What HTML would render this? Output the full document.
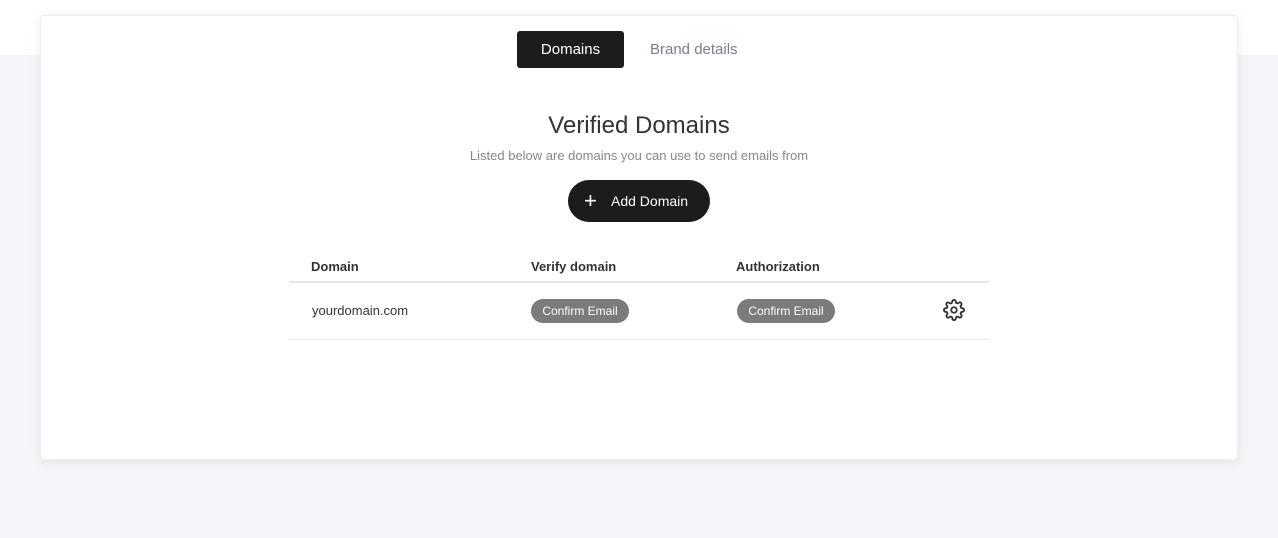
<!DOCTYPE html>
<html><head><style>
*{box-sizing:border-box;margin:0;padding:0}
body{width:1278px;height:538px;overflow:hidden;font-family:"Liberation Sans",sans-serif;background:#f4f5f9;position:relative}
.top{position:absolute;left:0;top:0;width:1278px;height:55px;background:#fff}
.card{position:absolute;left:40px;top:15px;width:1198px;height:445px;background:#fff;border-radius:4px;box-shadow:0 2px 12px rgba(0,0,0,0.07);border:1px solid #eceef2}
.tab{position:absolute;top:31px;height:37px;line-height:37px;font-size:15px}
.t1{left:517px;width:107px;background:#1c1c1c;color:#fff;border-radius:3px;text-align:center}
.t2{left:650px;color:#7a7f88}
h1{position:absolute;top:112px;left:0;width:1278px;text-align:center;font-weight:normal;font-size:24px;color:#333}
.sub{position:absolute;top:148px;left:0;width:1278px;text-align:center;font-size:13px;color:#888}
.btn{position:absolute;left:568px;top:180px;width:142px;height:42px;border-radius:21px;background:#1c1c1c;color:#fff;font-size:14px;line-height:42px}
.btn .p{position:absolute;left:16px;top:0;font-size:22px}
.btn .l{position:absolute;left:43px}
.th{position:absolute;top:259px;font-size:13px;color:#333;font-weight:bold}
.line{position:absolute;left:289px;width:700px;background:#e6e7ea}
.td{position:absolute;top:303px;font-size:13px;color:#333}
.pill{position:absolute;top:299px;height:24px;line-height:24px;width:98px;border-radius:12px;background:#7b7b7b;color:#fff;font-size:12px;text-align:center}
</style></head><body>
<div class="top"></div>
<div class="card"></div>
<div class="tab t1">Domains</div>
<div class="tab t2">Brand details</div>
<h1>Verified Domains</h1>
<div class="sub">Listed below are domains you can use to send emails from</div>
<div class="btn"><span class="p">+</span><span class="l">Add Domain</span></div>
<div class="th" style="left:311px">Domain</div>
<div class="th" style="left:531px">Verify domain</div>
<div class="th" style="left:736px">Authorization</div>
<div class="line" style="top:281px;height:2px"></div>
<div class="td" style="left:312px">yourdomain.com</div>
<div class="pill" style="left:531px">Confirm Email</div>
<div class="pill" style="left:737px">Confirm Email</div>
<svg style="position:absolute;left:943px;top:299px" width="22" height="22" viewBox="0 0 24 24" fill="none" stroke="#333" stroke-width="2"><circle cx="12" cy="12" r="3"/><path d="M19.4 15a1.650 1.65 0 0 0 .33 1.82l.06.06a2 2 0 1 1-2.83 2.830l-.06-.06a1.65 1.65 0 0 0-1.82-.33 1.65 1.65 0 0 0-1 1.51V21a2 2 0 0 1-4 0v-.09A1.65 1.65 0 0 0 9 19.4a1.65 1.65 0 0 0-1.82.33l-.06.06a2 2 0 1 1-2.83-2.83l.06-.06A1.65 1.65 0 0 0 4.68 15a1.65 1.65 0 0 0-1.51-1H3a2 2 0 0 1 0-4h.09A1.65 1.65 0 0 0 4.6 9a1.65 1.65 0 0 0-.33-1.82l-.06-.06a2 2 0 1 1 2.830-2.83l.06.06A1.65 1.65 0 0 0 9 4.68 1.65 1.65 0 0 0 10 3.17V3a2 2 0 0 1 4 0v.09a1.65 1.65 0 0 0 1 1.51 1.65 1.65 0 0 0 1.82-.33l.06-.06a2 2 0 1 1 2.83 2.83l-.06.06A1.65 1.65 0 0 0 19.4 9a1.65 1.65 0 0 0 1.51 1H21a2 2 0 0 1 0 4h-.09a1.65 1.65 0 0 0-1.51 1z"/></svg>
<div class="line" style="top:339px;height:1px"></div>
</body></html>
